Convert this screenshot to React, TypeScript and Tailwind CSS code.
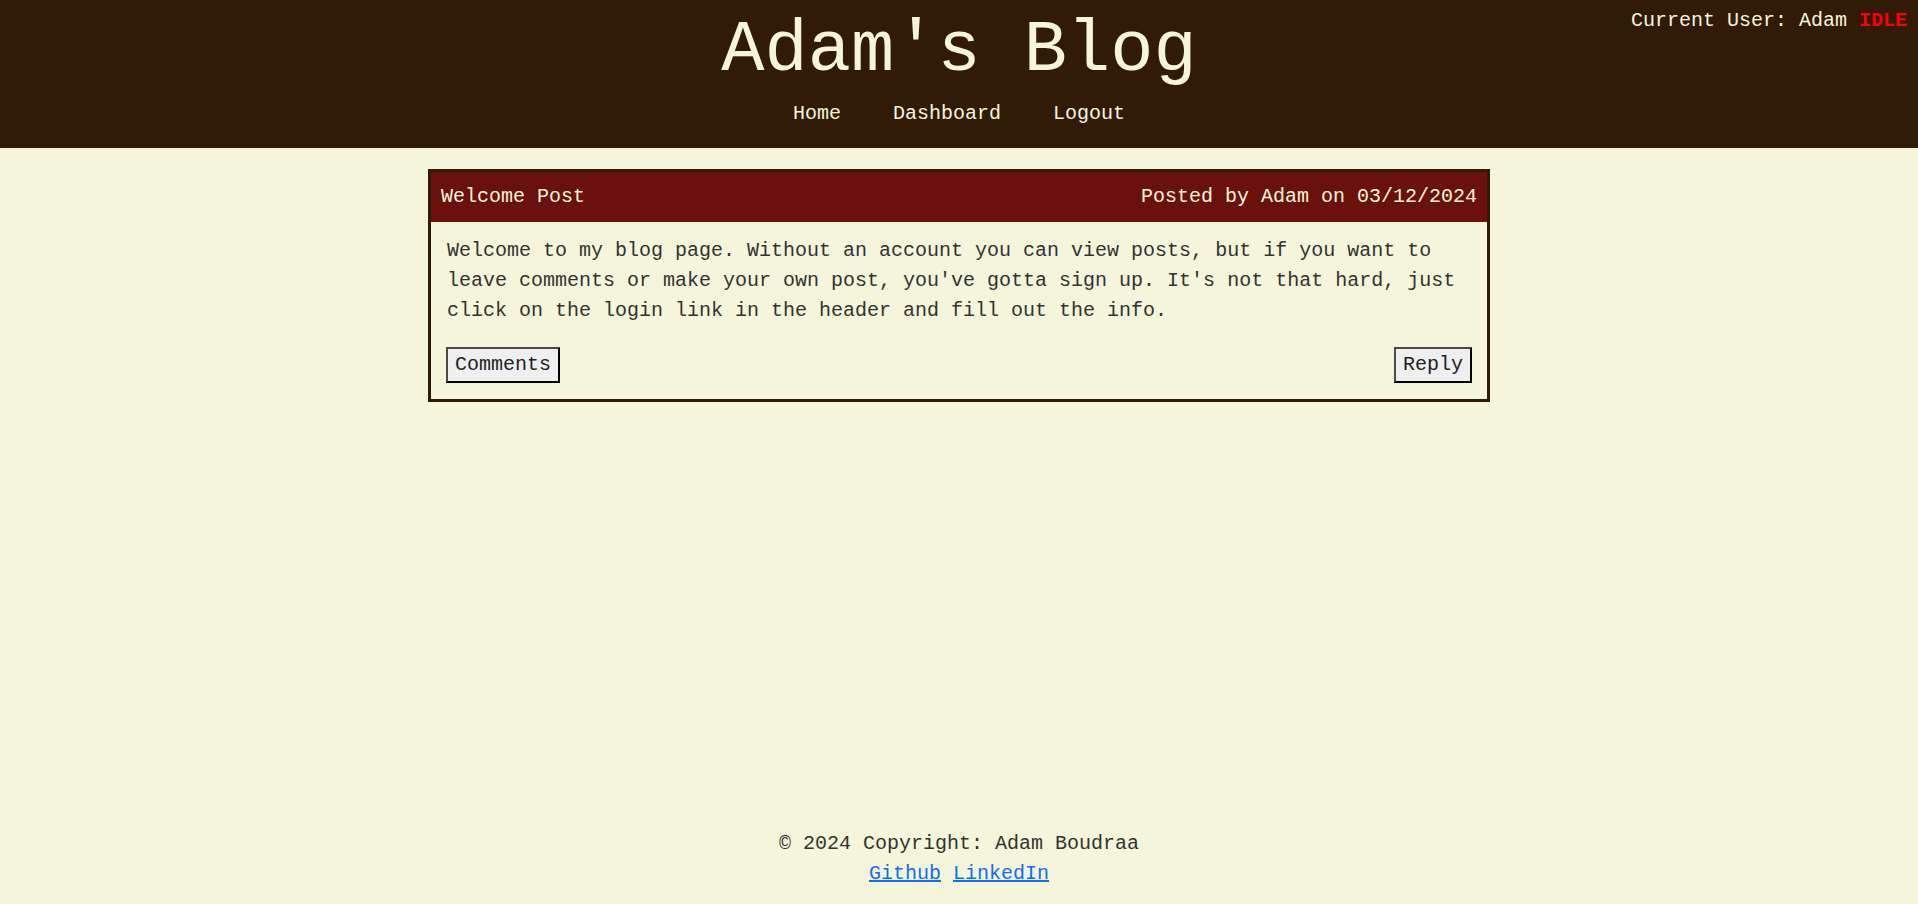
import React from "react";

export default function App() {
  return (
    <div
      className="min-h-screen flex flex-col bg-[#f5f5dc] text-[20px] leading-[30px] text-[#333]"
      style={{ fontFamily: '"Liberation Mono", "Courier New", monospace' }}
    >
      <header className="relative bg-[#321b06] h-[148px] flex flex-col items-center text-[#f5f5dc]">
        <h1 className="mt-[15px] text-[72px] leading-[72px] font-normal">Adam's Blog</h1>
        <nav className="mt-[12px] flex gap-[52px]">
          <a className="cursor-pointer">Home</a>
          <a className="cursor-pointer">Dashboard</a>
          <a className="cursor-pointer">Logout</a>
        </nav>
        <div className="absolute top-[6px] right-[11px]">
          Current User: Adam <span className="font-bold text-[#ff0000]">IDLE</span>
        </div>
      </header>

      <main className="flex flex-col items-center pt-[21px]">
        <div className="w-[1062px] border-[3px] border-[#321b06]">
          <div className="bg-[#69110a] text-[#f5f5dc] px-[10px] py-[10px] flex justify-between">
            <span>Welcome Post</span>
            <span>Posted by Adam on 03/12/2024</span>
          </div>
          <div className="pt-[14px] px-[15px] pb-[16px]">
            <p className="pl-px mb-[21px]">
              Welcome to my blog page. Without an account you can view posts, but if you want to leave comments or make your own post, you've gotta sign up. It's not that hard, just click on the login link in the header and fill out the info.
            </p>
            <div className="flex justify-between">
              <button className="bg-[#efefef] border-2 border-t-[#4a4a4a] border-l-[#4a4a4a] border-r-black border-b-black px-[7px] py-px text-[#222]">
                Comments
              </button>
              <button className="bg-[#efefef] border-2 border-t-[#4a4a4a] border-l-[#4a4a4a] border-r-black border-b-black px-[7px] py-px text-[#222]">
                Reply
              </button>
            </div>
          </div>
        </div>
      </main>

      <footer className="mt-auto pb-[15px] flex flex-col items-center">
        <div>© 2024 Copyright: Adam Boudraa</div>
        <div>
          <a className="text-[#0d6efd] underline cursor-pointer">Github</a>{" "}
          <a className="text-[#0d6efd] underline cursor-pointer">LinkedIn</a>
        </div>
      </footer>
    </div>
  );
}
